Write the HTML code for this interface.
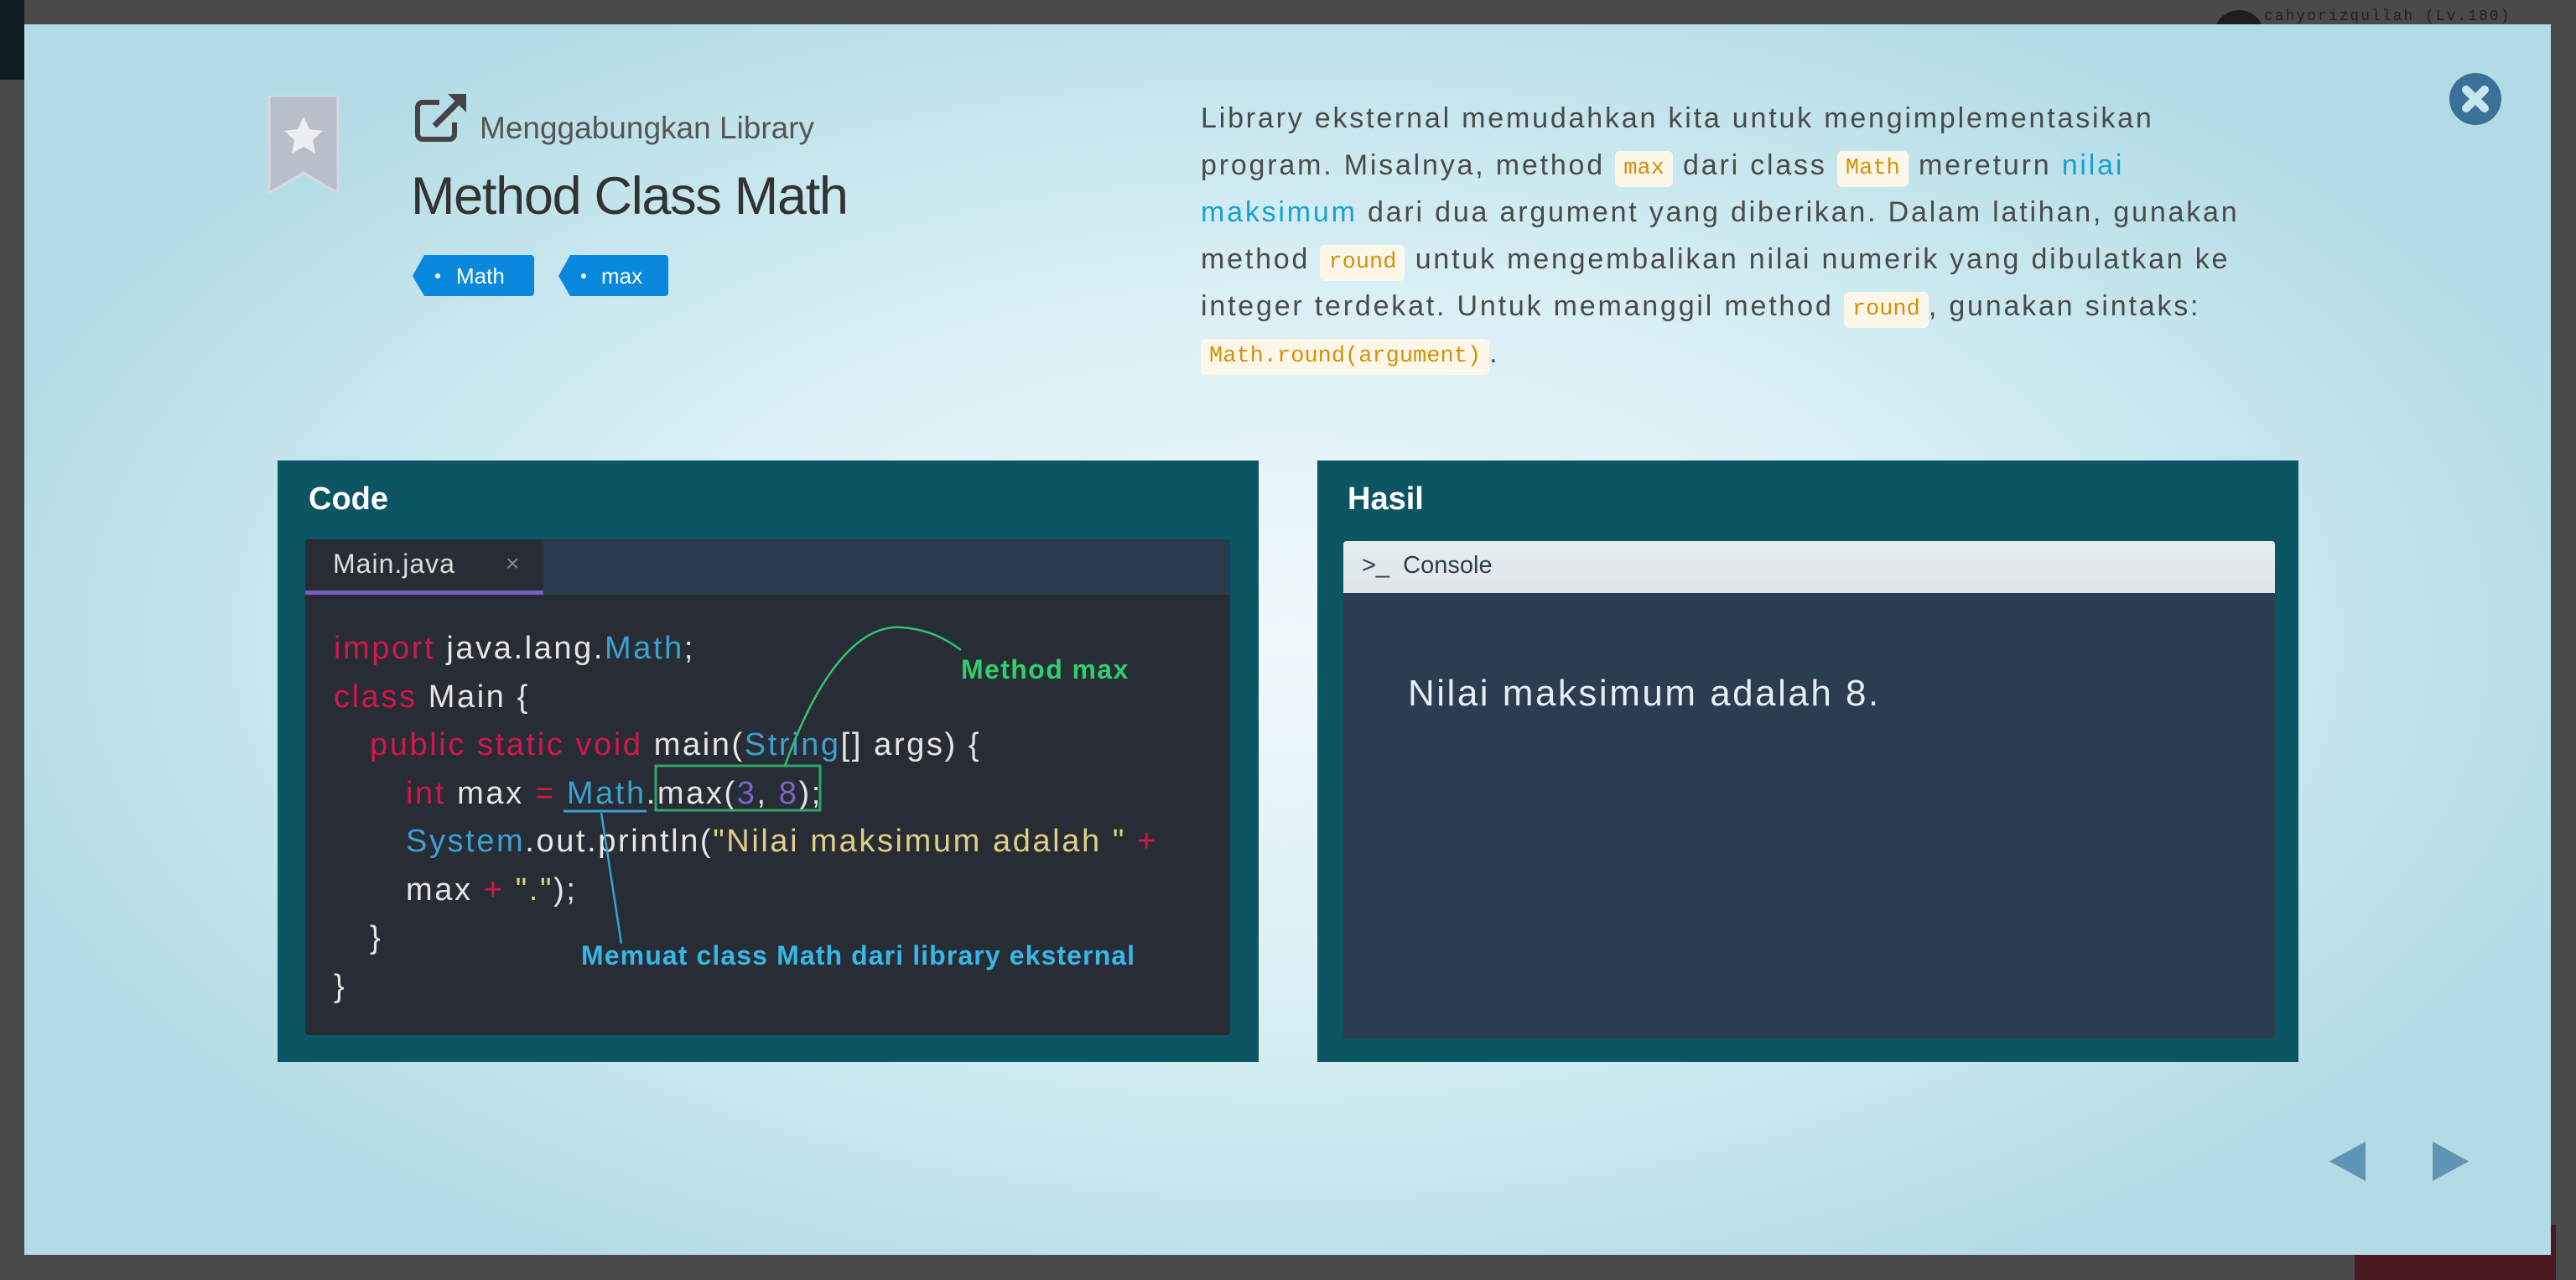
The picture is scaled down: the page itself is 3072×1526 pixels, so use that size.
<!DOCTYPE html>
<html><head><meta charset="utf-8"><style>
*{margin:0;padding:0;box-sizing:border-box}
body{width:3072px;height:1526px;background:#4a4a4a;position:relative;overflow:hidden;font-family:"Liberation Sans",sans-serif}
.abs{position:absolute}
#modal{left:29px;top:29px;width:3013px;height:1467px;background:radial-gradient(ellipse 55% 60% at 50% 50%,#f0f9fc 0%,#d8eff5 50%,#b2dbe5 100%)}
.para{left:1432px;top:113px;font-size:34px;line-height:56px;color:#4a4a4a;white-space:nowrap;letter-spacing:2.8px}
.para div{height:56px}
.c{font-family:"Liberation Mono",monospace;font-size:27px;line-height:1;letter-spacing:0;color:#d4900a;background:#fdf7ea;border-radius:6px;padding:8px 10px;display:inline-block;vertical-align:1px}
.code{font-family:"Liberation Sans",sans-serif;font-size:38px;color:#e6e6e6;white-space:nowrap;letter-spacing:2.6px}
.k{color:#d1184a}.b{color:#3aa1d0}.s{color:#e0cf86}.n{color:#7a64c8}
</style></head><body>
<div class="abs" style="left:0;top:0;width:29px;height:95px;background:#0f1c24"></div>
<div class="abs" style="left:2700px;top:10px;font-size:18px;color:#222;letter-spacing:2px;font-family:'Liberation Mono',monospace">cahyorizqullah (Lv.180)</div>
<div class="abs" style="left:2640px;top:12px;width:60px;height:60px;border-radius:50%;background:#1e1e1e"></div>
<div class="abs" style="left:2808px;top:1460px;width:240px;height:66px;background:#4a1a22"></div>
<div id="modal" class="abs"></div>

<svg class="abs" style="left:319px;top:114px" width="86" height="116" viewBox="0 0 86 116"><path d="M2 0H84V116L43 92L2 116Z" fill="#b8bfca" stroke="#d5dae0" stroke-width="3"/><path d="M43 25l7 15 16 2-12 11 3 16-14-8-14 8 3-16-12-11 16-2z" fill="#eceef2"/></svg>
<svg class="abs" style="left:494px;top:110px" width="68" height="60" viewBox="0 0 68 60"><path d="M30 12H10a6 6 0 0 0-6 6v32a6 6 0 0 0 6 6h32a6 6 0 0 0 6-6V36" fill="none" stroke="#444" stroke-width="6"/><path d="M24 40L56 8" stroke="#444" stroke-width="7"/><path d="M40 2H62V24Z" fill="#444"/></svg>
<div class="abs" style="left:572px;top:132px;font-size:37px;color:#555">Menggabungkan Library</div>
<div class="abs" style="left:490px;top:198px;font-size:63px;color:#333;letter-spacing:-1.3px">Method Class Math</div>
<svg class="abs" style="left:492px;top:304px" width="310" height="50"><path d="M14 0H141a4 4 0 0 1 4 4V45a4 4 0 0 1-4 4H14L0 25Z" fill="#0a88de"/><path d="M188 0H301a4 4 0 0 1 4 4V45a4 4 0 0 1-4 4H188L174 25Z" fill="#0a88de"/><circle cx="30" cy="25" r="3" fill="#fff"/><circle cx="204" cy="25" r="3" fill="#fff"/><text x="52" y="34" font-family="Liberation Sans" font-size="26" fill="#fff">Math</text><text x="225" y="34" font-family="Liberation Sans" font-size="26" fill="#fff">max</text></svg>

<svg class="abs" style="left:2921px;top:87px" width="62" height="62"><circle cx="31" cy="31" r="31" fill="#3b7099"/><path d="M20 20L42 42M42 20L20 42" stroke="#c9e6ee" stroke-width="10" stroke-linecap="round"/></svg>

<div class="abs para">
<div>Library eksternal memudahkan kita untuk mengimplementasikan</div>
<div>program. Misalnya, method <span class="c">max</span> dari class <span class="c">Math</span> mereturn <span style="color:#16a2d4">nilai</span></div>
<div><span style="color:#16a2d4">maksimum</span> dari dua argument yang diberikan. Dalam latihan, gunakan</div>
<div>method <span class="c">round</span> untuk mengembalikan nilai numerik yang dibulatkan ke</div>
<div>integer terdekat. Untuk memanggil method <span class="c">round</span>, gunakan sintaks:</div>
<div><span class="c">Math.round(argument)</span>.</div>
</div>

<div class="abs" style="left:331px;top:549px;width:1170px;height:717px;background:#0c5664"></div>
<div class="abs" style="left:368px;top:574px;font-size:38px;font-weight:bold;color:#fff">Code</div>
<div class="abs" style="left:364px;top:643px;width:1103px;height:591px;background:#282c34;border-radius:4px"></div>
<div class="abs" style="left:648px;top:643px;width:819px;height:66px;background:#2b3a4c"></div>
<div class="abs" style="left:364px;top:704px;width:284px;height:5px;background:#7b5fc0"></div>
<div class="abs" style="left:397px;top:654px;font-size:32px;color:#ddd;letter-spacing:1px">Main.java</div>
<div class="abs" style="left:603px;top:656px;font-size:28px;color:#888">×</div>
<div class="abs code" style="left:398px;top:745px;line-height:57.5px">
<div><span class="k">import</span> java.lang.<span class="b">Math</span>;</div>
<div><span class="k">class</span> Main {</div>
<div style="padding-left:43px"><span class="k">public static void</span> main(<span class="b">String</span>[] args) {</div>
<div style="padding-left:86px"><span class="k">int</span> max <span class="k">=</span> <span class="b">Math</span>.max(<span class="n">3</span>, <span class="n">8</span>);</div>
<div style="padding-left:86px"><span class="b">System</span>.out.println(<span class="s">"Nilai maksimum adalah "</span> <span class="k">+</span></div>
<div style="padding-left:86px">max <span class="k">+</span> <span class="s">"."</span>);</div>
<div style="padding-left:43px">}</div>
<div>}</div>
</div>
<svg class="abs" style="left:331px;top:549px" width="1170" height="717">
<rect x="451" y="364" width="196" height="53" fill="none" stroke="#2aa86a" stroke-width="3"/>
<path d="M341 418H440" stroke="#3aa1d0" stroke-width="3"/>
<path d="M386 420L410 576" stroke="#3aa1d0" stroke-width="2.5"/>
<path d="M605 364C650 240 700 195 745 199C780 202 800 215 815 226" fill="none" stroke="#2fc46c" stroke-width="2.5"/>
<text x="815" y="260" font-family="Liberation Sans" font-weight="bold" font-size="32" letter-spacing="1.4" fill="#2fd06a">Method max</text>
<text x="362" y="601" font-family="Liberation Sans" font-weight="bold" font-size="32" letter-spacing="1.1" fill="#35b8e8">Memuat class Math dari library eksternal</text>
</svg>

<div class="abs" style="left:1571px;top:549px;width:1170px;height:717px;background:#0c5664"></div>
<div class="abs" style="left:1607px;top:574px;font-size:38px;font-weight:bold;color:#fff">Hasil</div>
<div class="abs" style="left:1602px;top:645px;width:1111px;height:593px;background:#2b3d50;border-radius:4px"></div>
<div class="abs" style="left:1602px;top:645px;width:1111px;height:62px;background:linear-gradient(#e3edee,#e1e5ea);border-radius:4px 4px 0 0"></div>
<div class="abs" style="left:1624px;top:658px;font-size:29px;color:#2c3e50">&gt;_&nbsp; Console</div>
<div class="abs" style="left:1679px;top:802px;font-size:44px;color:#e8eef2;letter-spacing:2.5px">Nilai maksimum adalah 8.</div>

<svg class="abs" style="left:2778px;top:1361px" width="170" height="48"><path d="M43 0V47L0 23.5Z" fill="#5f94b5"/><path d="M123 0V47L166 23.5Z" fill="#5f94b5"/></svg>
</body></html>
